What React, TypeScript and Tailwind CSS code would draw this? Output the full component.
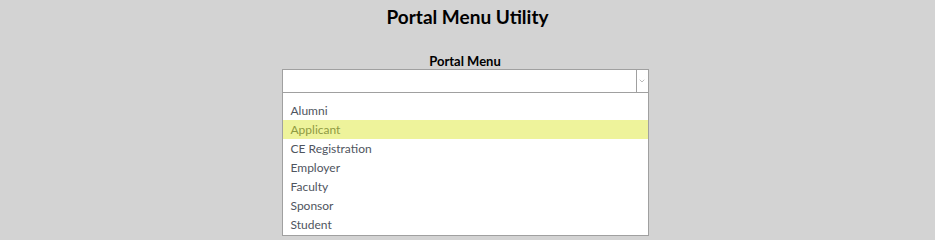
import { ChevronDown } from "lucide-react";

export default function App() {
  const options = ["Alumni", "Applicant", "CE Registration", "Employer", "Faculty", "Sponsor", "Student"];
  const selected = "Applicant";

  return (
    <div
      className="min-h-[240px] bg-[#d3d3d3] flex flex-col items-center"
      style={{ fontFamily: '"Century Gothic", "Lato", "Liberation Sans", sans-serif' }}
    >
      <h1 className="mt-[4px] text-[19px] leading-[26px] font-bold text-black">Portal Menu Utility</h1>

      <div className="mt-[23px] mr-[5px] w-[367px] flex flex-col">
        <label className="text-center text-[13px] leading-[16px] font-bold text-black">Portal Menu</label>
        <div className="h-[24px] bg-white border border-[#a0a0a0] flex">
          <div className="flex-1"></div>
          <div className="w-[12px] border-l border-[#a0a0a0] flex items-center justify-center">
            <ChevronDown className="w-[8px] h-[8px] text-[#9a9a9a]" strokeWidth={2} />
          </div>
        </div>
        <ul className="bg-white border border-t-0 border-[#a0a0a0] pt-[8px] pb-[1px]">
          {options.map((opt) => (
            <li
              key={opt}
              className={
                opt === selected
                  ? "h-[19px] leading-[19px] pl-[8px] text-[12px] bg-[#eef39b] text-[#8f9a42]"
                  : "h-[19px] leading-[19px] pl-[8px] text-[12px] text-[#4f5560]"
              }
            >
              {opt}
            </li>
          ))}
        </ul>
      </div>
    </div>
  );
}
